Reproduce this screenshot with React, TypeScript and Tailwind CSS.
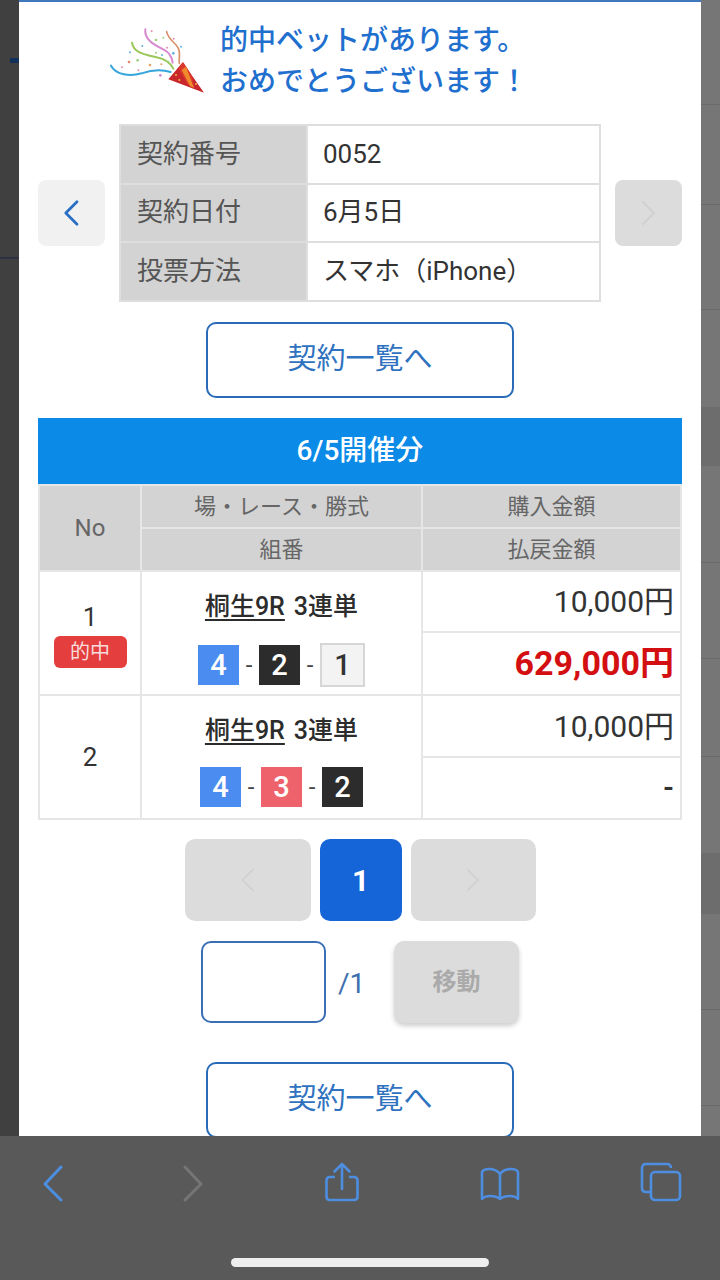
import React from "react";

const font = { fontFamily: 'Roboto, "Noto Sans CJK JP", sans-serif' };

function Confetti() {
  const dots: [number, number, string, number][] = [
    [155, 33, "#e58fb0", 3], [168, 60, "#9ccf7a", 4], [190, 53, "#9ccf7a", 3], [127, 78, "#5fb2dd", 3],
    [90, 97, "#5fb2dd", 3], [87, 126, "#e8836a", 4], [113, 121, "#9ccf7a", 4], [66, 142, "#e58fb0", 3],
    [115, 151, "#e58fb0", 3], [150, 135, "#e8a06a", 4], [184, 133, "#e8a06a", 3], [168, 98, "#9ccf7a", 3],
    [186, 105, "#5fb2dd", 3], [220, 100, "#5fb2dd", 4], [201, 83, "#e58fb0", 3], [221, 56, "#e58fb0", 3],
    [243, 80, "#5fb2dd", 3], [181, 166, "#c98ad0", 4], [205, 125, "#9ccf7a", 3],
  ];
  return (
    <svg width="120" height="90" viewBox="0 0 360 270" className="shrink-0" fill="none">
      <path d="M136 28C132 60 165 75 190 88C208 97 216 110 218 128" stroke="#d78ad0" strokeWidth="6" strokeLinecap="round" />
      <path d="M96 68C100 100 140 105 170 112C195 117 212 130 220 146" stroke="#9cc85a" strokeWidth="6" strokeLinecap="round" />
      <path d="M200 35C205 60 225 65 235 85C242 100 236 115 238 130" stroke="#d9906a" strokeWidth="5" strokeLinecap="round" />
      <path d="M33 137C48 165 90 170 125 160C160 148 185 148 212 156" stroke="#35a5dc" strokeWidth="6" strokeLinecap="round" />
      {dots.map(([cx, cy, c, r], i) => (
        <circle key={i} cx={cx} cy={cy} r={r} fill={c} />
      ))}
      <path d="M205 178L248 127L312 218Z" fill="#c8262a" />
      <path d="M235 143L250 127L275 166L284 205L262 193Z" fill="#d93a2c" />
      <path d="M245 150L258 140L282 204L270 198Z" fill="#f08a2a" />
      <circle cx="228" cy="165" r="3" fill="#f2b34a" />
      <circle cx="238" cy="180" r="3" fill="#f2b34a" />
      <circle cx="288" cy="192" r="3" fill="#f2b34a" />
    </svg>
  );
}

function Chevron({ dir, color, size = 32, width = 3 }: { dir: "l" | "r"; color: string; size?: number; width?: number }) {
  return (
    <svg width={size * 0.6} height={size} viewBox="0 0 18 30" fill="none">
      <path d={dir === "l" ? "M15 3L3 15L15 27" : "M3 3L15 15L3 27"} stroke={color} strokeWidth={width} strokeLinecap="round" strokeLinejoin="round" />
    </svg>
  );
}

function ListButton() {
  return (
    <div className="mx-auto flex h-[76px] w-[308px] shrink-0 items-center justify-center rounded-[10px] border-2 border-[#2a6bb8] bg-white text-[29px] text-[#2f72c0]">
      契約一覧へ
    </div>
  );
}

function Chip({ n, cls }: { n: number; cls: string }) {
  return <span className={`flex items-center justify-center text-[29px] font-medium leading-none ${cls}`}>{n}</span>;
}

const BLUE = "h-10 w-[41px] bg-[#4a8cef] text-white";
const BLACK = "h-10 w-[41px] bg-[#2c2c2c] text-white";
const RED = "h-10 w-[41px] bg-[#ee636b] text-white";
const WHITE = "h-[44px] w-[45px] border-2 border-[#d6d6d6] bg-[#f3f3f3] text-[#333]";

function Dash() {
  return <span className="w-[20px] text-center text-[24px] leading-none text-[#444]">-</span>;
}

function RaceCell({ chips }: { chips: React.ReactNode }) {
  return (
    <td rowSpan={2} className="border-2 border-[#e6e6e6] p-0 text-center align-top">
      <div className="flex h-[122px] flex-col items-center">
        <div className="mt-[16px] flex h-[36px] items-center gap-[9px] text-[25px] font-medium leading-none text-[#2c2c2c]">
          <span className="underline underline-offset-4">桐生9R</span>
          <span>3連単</span>
        </div>
        <div className="mt-[19px] flex items-center">{chips}</div>
      </div>
    </td>
  );
}

export default function App() {
  const th = "border-2 border-[#e6e6e6] bg-[#d3d3d3] p-0 text-center text-[22px] font-normal text-[#666]";
  const lab = "border-2 border-[#dedede] bg-[#d3d3d3] pl-[16px] text-left text-[26px] font-normal text-[#555]";
  const val = "border-2 border-[#dedede] bg-white pl-[15px] text-left text-[26px] text-[#333]";
  const amt = "border-2 border-[#e6e6e6] p-0 pr-[6px] text-right text-[30px] text-[#333]";
  const rightLines = [
    "h-[105px] border-b border-[#6a6a6a]",
    "h-[100px] border-b border-[#6a6a6a]",
    "h-[105px] border-b border-[#6a6a6a]",
    "h-[97px]",
    "h-[59px] bg-[#6d6d6d]",
    "h-[97px] border-b border-[#6a6a6a]",
    "h-[96px] border-b border-[#6a6a6a]",
    "h-[98px] border-b border-[#6a6a6a]",
    "h-[96px]",
    "h-[61px] bg-[#6d6d6d]",
    "h-[96px] border-b border-[#6a6a6a]",
    "h-[96px] border-b border-[#6a6a6a]",
  ];
  return (
    <div className="flex h-[1280px] w-[720px] flex-col overflow-hidden bg-[#595959]" style={font}>
      <div className="flex h-[1136px] shrink-0">
        <div className="h-full w-[19px] shrink-0 bg-[#404040]">
          <div className="ml-[10px] mt-[58px] h-[5px] w-[9px] bg-[#12305c]" />
          <div className="mt-[194px] h-[2px] w-full bg-[#2c3244]" />
        </div>
        <div className="flex h-full w-[682px] shrink-0 flex-col overflow-hidden border-t-2 border-[#3f78bf] bg-white px-[19px]">
          <div className="-ml-0 flex h-[82px] shrink-0 pl-[62px] mt-[18px]">
            <Confetti />
            <div className="text-[28px] font-medium leading-[41px] tracking-[0px] text-[#1f6fcf] whitespace-nowrap">
              <div>的中ベットがあります。</div>
              <div>おめでとうございます！</div>
            </div>
          </div>
          <div className="mt-[22px] flex shrink-0 items-center justify-between">
            <div className="flex h-[66px] w-[67px] items-center justify-center rounded-[8px] bg-[#f1f1f1]">
              <Chevron dir="l" color="#2a6fc4" size={28} />
            </div>
            <table className="h-[178px] w-[482px] table-fixed border-collapse">
              <colgroup>
                <col className="w-[187px]" />
                <col />
              </colgroup>
              <tbody>
                <tr>
                  <th className={lab}>契約番号</th>
                  <td className={val}>0052</td>
                </tr>
                <tr>
                  <th className={lab}>契約日付</th>
                  <td className={val}>6月5日</td>
                </tr>
                <tr>
                  <th className={lab}>投票方法</th>
                  <td className={val}>スマホ（iPhone）</td>
                </tr>
              </tbody>
            </table>
            <div className="flex h-[66px] w-[67px] items-center justify-center rounded-[8px] bg-[#dcdcdc]">
              <Chevron dir="r" color="#d0d0d0" size={28} width={2} />
            </div>
          </div>
          <div className="mt-[20px] shrink-0">
            <ListButton />
          </div>
          <div className="mt-[20px] flex h-[66px] shrink-0 items-center justify-center bg-[#0b8ae8] text-[28px] font-medium text-white">
            6/5開催分
          </div>
          <table className="w-[644px] shrink-0 table-fixed border-collapse">
            <colgroup>
              <col className="w-[102px]" />
              <col className="w-[281px]" />
              <col />
            </colgroup>
            <tbody>
              <tr className="h-[43px]">
                <th rowSpan={2} className={`${th} text-[24px]`}>No</th>
                <th className={th}>場・レース・勝式</th>
                <th className={th}>購入金額</th>
              </tr>
              <tr className="h-[43px]">
                <th className={th}>組番</th>
                <th className={th}>払戻金額</th>
              </tr>
              <tr className="h-[61px]">
                <td rowSpan={2} className="border-2 border-[#e6e6e6] p-0 text-center align-top">
                  <div className="mt-[29px] text-[26px] leading-[32px] text-[#333]">1</div>
                  <div className="mx-auto mt-[3px] flex h-[32px] w-[73px] items-center justify-center rounded-[6px] bg-[#e53e3e] text-[20px] text-[#f6dcdc]">
                    的中
                  </div>
                </td>
                <RaceCell
                  chips={
                    <>
                      <Chip n={4} cls={BLUE} />
                      <Dash />
                      <Chip n={2} cls={BLACK} />
                      <Dash />
                      <Chip n={1} cls={WHITE} />
                    </>
                  }
                />
                <td className={amt}>10,000円</td>
              </tr>
              <tr className="h-[63px]">
                <td className="border-2 border-[#e6e6e6] p-0 pr-[6px] text-right text-[34px] font-bold text-[#d40f12]">629,000円</td>
              </tr>
              <tr className="h-[62px]">
                <td rowSpan={2} className="border-2 border-[#e6e6e6] p-0 text-center text-[26px] text-[#333]">2</td>
                <RaceCell
                  chips={
                    <>
                      <Chip n={4} cls={BLUE} />
                      <Dash />
                      <Chip n={3} cls={RED} />
                      <Dash />
                      <Chip n={2} cls={BLACK} />
                    </>
                  }
                />
                <td className={amt}>10,000円</td>
              </tr>
              <tr className="h-[62px]">
                <td className="border-2 border-[#e6e6e6] p-0 pr-[6px] text-right text-[28px] font-bold text-[#333]">-</td>
              </tr>
            </tbody>
          </table>
          <div className="mt-[19px] flex shrink-0 justify-center gap-[9px]">
            <div className="flex h-[82px] w-[126px] items-center justify-center rounded-[10px] bg-[#dcdcdc]">
              <Chevron dir="l" color="#d0d0d0" size={26} width={2} />
            </div>
            <div className="flex h-[82px] w-[82px] items-center justify-center rounded-[10px] bg-[#1565d8] text-[30px] font-bold text-white">
              1
            </div>
            <div className="flex h-[82px] w-[125px] items-center justify-center rounded-[10px] bg-[#dcdcdc]">
              <Chevron dir="r" color="#d0d0d0" size={26} width={2} />
            </div>
          </div>
          <div className="mt-[20px] flex shrink-0 justify-center">
            <div className="h-[82px] w-[125px] rounded-[10px] border-2 border-[#3b6fb5] bg-white" />
            <div className="flex w-[68px] items-center pl-[12px] pt-[4px] text-[28px] text-[#3d6fae]">/1</div>
            <div className="flex h-[82px] w-[125px] items-center justify-center rounded-[10px] bg-[#dcdcdc] text-[24px] font-bold text-[#aaaaaa] shadow-[0_3px_5px_rgba(0,0,0,0.2)]">
              移動
            </div>
          </div>
          <div className="mt-[39px] shrink-0">
            <ListButton />
          </div>
        </div>
        <div className="h-full w-[19px] shrink-0 bg-[#767676]">
          {rightLines.map((c, i) => (
            <div key={i} className={c} />
          ))}
        </div>
      </div>
      <div className="flex h-[144px] shrink-0 flex-col bg-[#595959]">
        <div className="flex h-[122px] items-start justify-between pl-[42px] pr-[38px] pt-[26px]">
          <svg width="21" height="38" viewBox="0 0 21 38" fill="none" className="mt-[2px]">
            <path d="M19 3L3 20L19 36" stroke="#4d8ee0" strokeWidth="3" strokeLinecap="round" strokeLinejoin="round" />
          </svg>
          <svg width="21" height="38" viewBox="0 0 21 38" fill="none" className="mt-[2px]">
            <path d="M2 3L18 20L2 36" stroke="#757575" strokeWidth="3" strokeLinecap="round" strokeLinejoin="round" />
          </svg>
          <svg width="36" height="40" viewBox="0 0 36 40" fill="none">
            <path d="M11 15H6C3.8 15 2.5 16.3 2.5 18.5V34.5C2.5 36.7 3.8 38 6 38H30C32.2 38 33.5 36.7 33.5 34.5V18.5C33.5 16.3 32.2 15 30 15H25" stroke="#4d8ee0" strokeWidth="2.6" />
            <path d="M18 27V2M10.5 9.5L18 2L25.5 9.5" stroke="#4d8ee0" strokeWidth="2.6" strokeLinecap="round" strokeLinejoin="round" />
          </svg>
          <svg width="40" height="34" viewBox="0 0 40 34" fill="none" className="mt-[5px]">
            <path d="M20 7C17 3 13 2 9 2C6 2 3 3 2 5V32C5 28 15 28 20 32C25 28 35 28 38 32V5C37 3 34 2 31 2C27 2 23 3 20 7ZM20 7V32" stroke="#4d8ee0" strokeWidth="2.6" strokeLinejoin="round" />
          </svg>
          <svg width="42" height="40" viewBox="0 0 42 40" fill="none">
            <path d="M31 6C31 3.5 29.5 2 27 2H6C3.5 2 2 3.5 2 6V26C2 28.5 3.5 30 6 30H11" stroke="#4d8ee0" strokeWidth="2.6" />
            <rect x="11" y="10" width="29" height="28" rx="4" stroke="#4d8ee0" strokeWidth="2.6" />
          </svg>
        </div>
        <div className="mx-auto h-[9px] w-[258px] rounded-full bg-[#eeeeee]" />
      </div>
    </div>
  );
}
